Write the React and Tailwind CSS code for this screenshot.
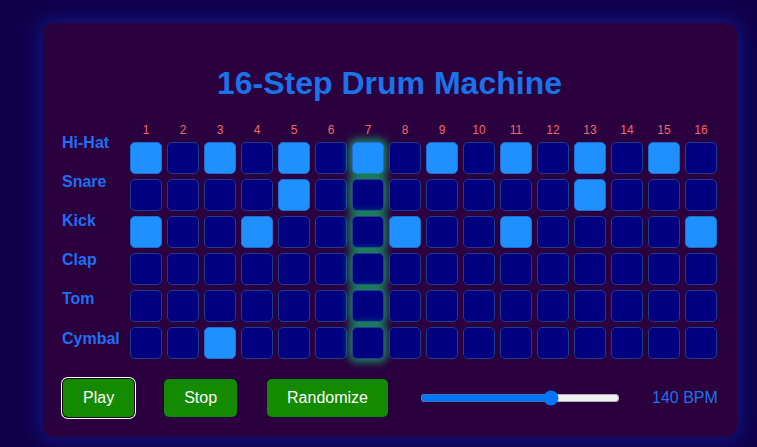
import React from 'react';

const TRACKS = [
  { name: 'Hi-Hat', steps: [1, 3, 5, 7, 9, 11, 13, 15] },
  { name: 'Snare', steps: [5, 13] },
  { name: 'Kick', steps: [1, 4, 8, 11, 16] },
  { name: 'Clap', steps: [] },
  { name: 'Tom', steps: [] },
  { name: 'Cymbal', steps: [3] },
];

const CURRENT = 7;
const STEPS = Array.from({ length: 16 }, (_, i) => i + 1);

const Cell = ({ on, playing }) => (
  <div
    className={
      'w-8 h-8 rounded-[5px] border ' +
      (on ? 'bg-[#1e90ff] border-[#1e6fd0] ' : 'bg-[#000080] border-[#1b3f8e] ') +
      (playing ? 'shadow-[0_0_9px_3px_rgba(20,200,110,0.7)]' : '')
    }
  />
);

const App = () => {
  return (
    <div className="min-h-screen h-[447px] bg-[#10004a] pt-[23px] overflow-hidden font-['Liberation_Sans',Arial,sans-serif]">
      <div className="ml-[43px] w-[694px] h-[414px] bg-[#2a003f] rounded-[10px] shadow-[0_0_18px_4px_rgba(20,60,230,0.35)] pt-[21px] pl-[19px] pr-[20px]">
        <h1 className="mt-[21px] mb-[20px] text-center text-[32px] leading-[37px] font-bold text-[#1a73e8]">
          16-Step Drum Machine
        </h1>

        <div className="flex">
          <div className="w-[68px] flex flex-col pt-[1px]">
            {TRACKS.map((t) => (
              <div key={t.name} className="h-[39.2px] flex items-center text-[16px] font-bold text-[#1f6ff2]">
                {t.name}
              </div>
            ))}
          </div>

          <div className="flex flex-col">
            <div className="flex gap-[5px] h-[20px]">
              {STEPS.map((n) => (
                <div key={n} className="w-8 text-center text-[12px] leading-[16px] text-[#f26a6a]">
                  {n}
                </div>
              ))}
            </div>
            <div className="flex flex-col gap-[5px]">
              {TRACKS.map((t) => (
                <div key={t.name} className="flex gap-[5px]">
                  {STEPS.map((n) => (
                    <Cell key={n} on={t.steps.includes(n)} playing={n === CURRENT} />
                  ))}
                </div>
              ))}
            </div>
          </div>
        </div>

        <div className="flex items-center gap-[30px] mt-[20px] ml-[1px]">
          <button className="shrink-0 h-[38px] px-5 rounded-[5px] bg-[#148a00] text-white text-[16px] shadow-[0_0_0_1px_#000,0_0_0_2px_#fff]">
            Play
          </button>
          <button className="shrink-0 h-[38px] px-5 rounded-[5px] bg-[#148a00] text-white text-[16px]">
            Stop
          </button>
          <button className="shrink-0 h-[38px] px-5 rounded-[5px] bg-[#148a00] text-white text-[16px]">
            Randomize
          </button>
          <input type="range" min="60" max="180" defaultValue="140" className="shrink-0 w-[200px] mx-[2px]" />
          <span className="shrink-0 whitespace-nowrap text-[16px] text-[#1a73e8]">140 BPM</span>
        </div>
      </div>
    </div>
  );
};

export default App;
